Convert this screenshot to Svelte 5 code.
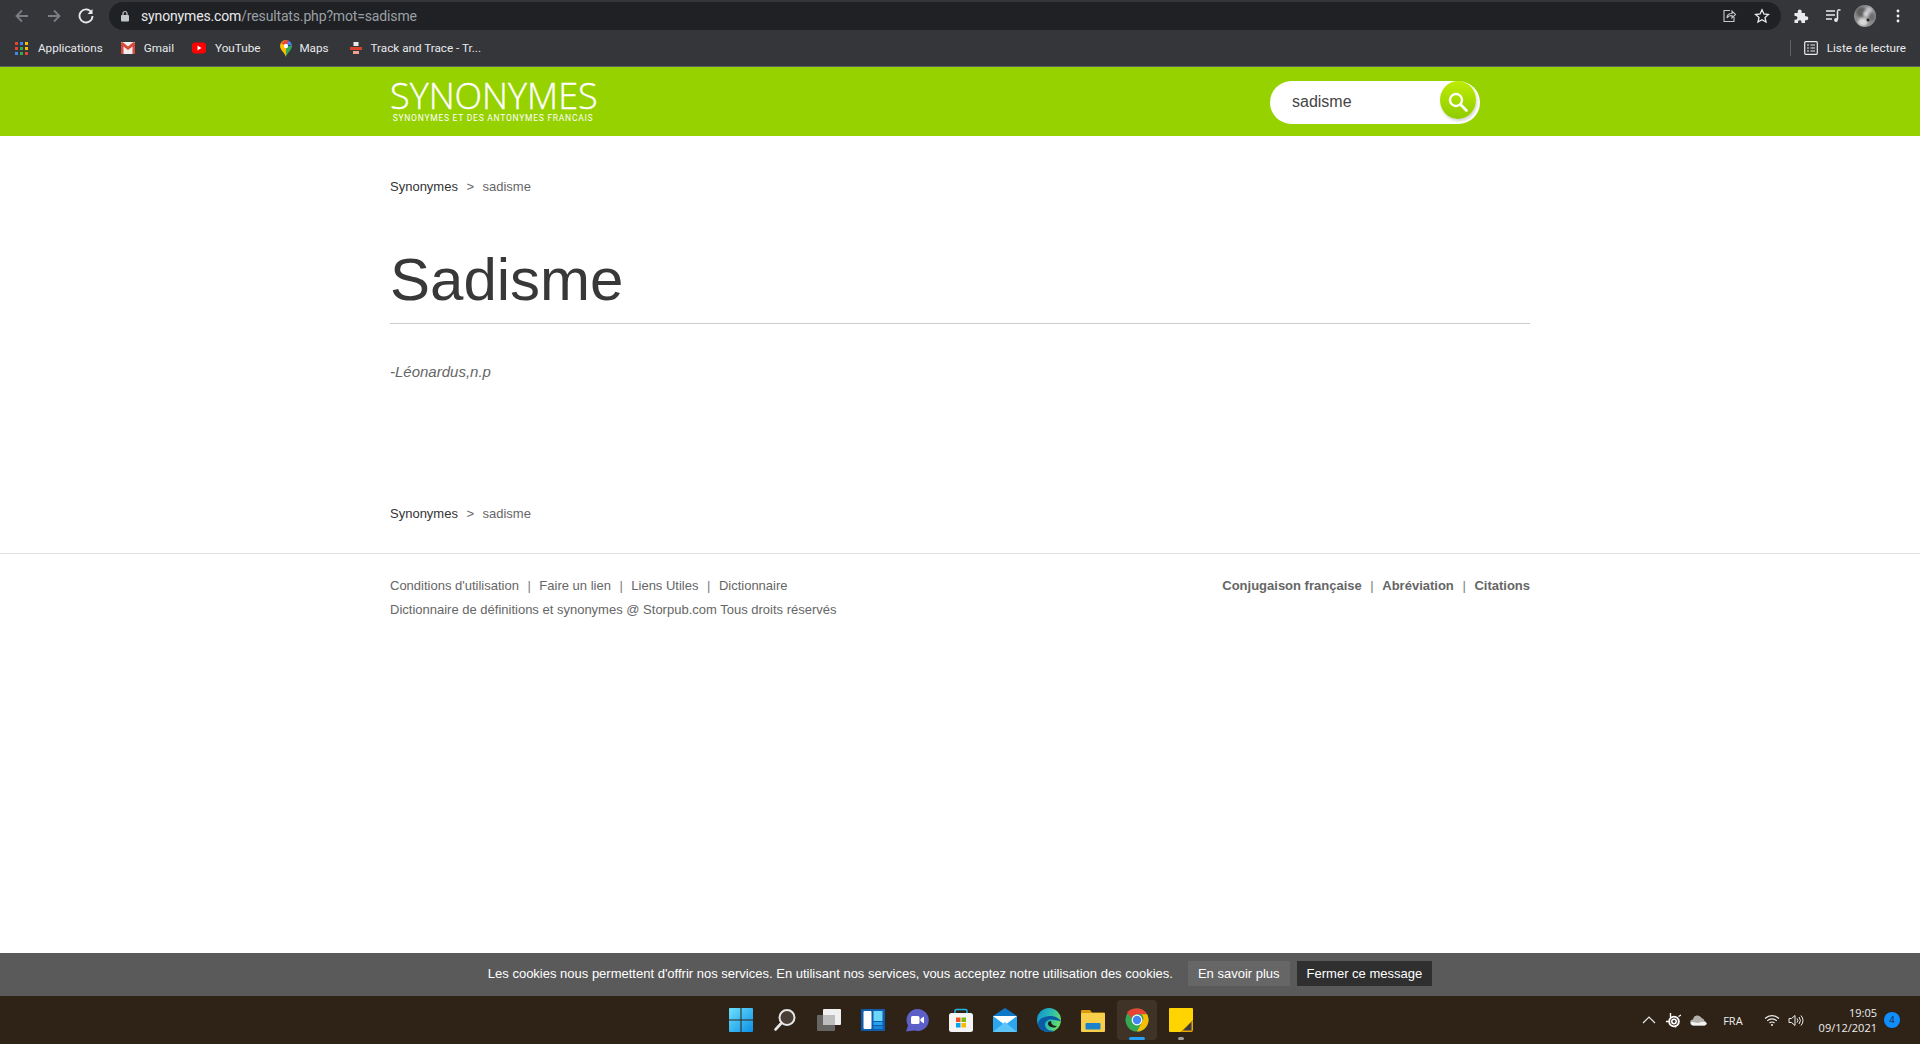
<script>
  const bookmarks = [
    { label: 'Applications', kind: 'apps' },
    { label: 'Gmail', kind: 'gmail' },
    { label: 'YouTube', kind: 'yt' },
    { label: 'Maps', kind: 'maps' },
    { label: 'Track and Trace - Tr...', kind: 'track' }
  ];
  const appColors = ['#ea4335','#4285f4','#fbbc04','#ea4335','#34a853','#fbbc04','#4285f4','#34a853','#ea4335'];
</script>

<div class="page">
  <div class="toolbar">
    <svg class="nav" width="18" height="18" viewBox="0 0 18 18"><path d="M15 9H4M9 3.5 3.5 9 9 14.500" fill="none" stroke="#7b7e83" stroke-width="1.800"/></svg>
    <svg class="nav" width="18" height="18" viewBox="0 0 18 18"><path d="M3 9h11M9 3.500 14.500 9 9 14.500" fill="none" stroke="#7b7e83" stroke-width="1.800"/></svg>
    <svg class="nav" width="18" height="18" viewBox="0 0 18 18"><path d="M14.500 5.500A6.500 6.500 0 1 0 15.500 9" fill="none" stroke="#e8eaed" stroke-width="1.800"/><path d="M15.500 2v5h-5z" fill="#e8eaed"/></svg>
    <div class="omnibox">
      <svg width="10" height="12" viewBox="0 0 10 12"><rect x="1" y="5" width="8" height="6.500" rx="1" fill="#c4c7c9"/><path d="M3 5V3.500a2 2 0 0 1 4 0V5" fill="none" stroke="#c4c7c9" stroke-width="1.200"/></svg>
      <span class="url"><b>synonymes.com</b>/resultats.php?mot=sadisme</span>
      <span class="grow"></span>
      <svg width="16" height="16" viewBox="0 0 16 16"><path d="M9 2.500H3v11h10V9" fill="none" stroke="#c4c7c9" stroke-width="1.100"/><path d="M6 10c0-3 2-4.500 5-4.500V3l3.500 3.500L11 10V7.500C9 7.500 7 8 6 10z" fill="none" stroke="#c4c7c9" stroke-width="1.100"/></svg>
      <svg class="star" width="16" height="16" viewBox="0 0 16 16"><path d="m8 1.800 1.900 4.200 4.500.5-3.400 3 1 4.500L8 11.700 4 14l1-4.500-3.400-3 4.500-.5z" fill="none" stroke="#e8eaed" stroke-width="1.300"/></svg>
    </div>
    <svg class="ext" width="16" height="16" viewBox="0 0 16 16"><path d="M1.500 5h3.200V3.500a2 2 0 0 1 4 0V5h3.300v3.200h1.300a2 2 0 0 1 0 4H12V15H8.500v-1.300a1.800 1.800 0 0 0-3.500 0V15H1.500v-3.300H3a1.900 1.900 0 0 0 0-3.700H1.500z" fill="#e8eaed"/></svg>
    <svg class="media" width="16" height="16" viewBox="0 0 16 16"><path d="M1 3h9M1 7h9M1 11h6" stroke="#e8eaed" stroke-width="1.300"/><path d="M12.500 2.500v9" stroke="#e8eaed" stroke-width="1.500"/><path d="M12.500 2h3" stroke="#e8eaed" stroke-width="1.500"/><circle cx="11" cy="12" r="1.900" fill="#e8eaed"/></svg>
    <svg class="avatar" width="22" height="22" viewBox="0 0 22 22">
      <defs><clipPath id="av"><circle cx="11" cy="11" r="11"/></clipPath><filter id="soft"><feGaussianBlur stdDeviation=".9"/></filter></defs>
      <g clip-path="url(#av)">
        <rect width="22" height="22" fill="#8c8c8c"/>
        <g filter="url(#soft)">
          <ellipse cx="7" cy="7" rx="5" ry="5" fill="#5f5f5f"/>
          <ellipse cx="9" cy="17" rx="5" ry="4" fill="#d8d8d8"/>
          <ellipse cx="15" cy="5" rx="3" ry="3" fill="#c2c2c8"/>
          <ellipse cx="12" cy="9" rx="2.500" ry="3" fill="#d5d5d8"/>
          <ellipse cx="18" cy="12" rx="3" ry="4" fill="#6d6d72"/>
        </g>
        <circle cx="14" cy="15" r="1.500" fill="#222"/>
      </g>
    </svg>
    <svg class="dots" width="4" height="16" viewBox="0 0 4 16"><circle cx="2" cy="3" r="1.400" fill="#f1f3f4"/><circle cx="2" cy="8" r="1.400" fill="#f1f3f4"/><circle cx="2" cy="13" r="1.400" fill="#f1f3f4"/></svg>
  </div>

  <div class="bookmarks">
    {#each bookmarks as b}
      <div class="bm" class:maps={b.kind === 'maps'}>
        {#if b.kind === 'apps'}
          <div class="apps">{#each appColors as c}<i style:background={c}></i>{/each}</div>
        {:else if b.kind === 'gmail'}
          <svg width="14" height="12" viewBox="0 0 14 12"><rect width="14" height="12" rx="1" fill="#eee"/><path d="M0 1v11h2.500V4.500L7 8l4.500-3.500V12H14V1L12.500 0 7 4.500 1.500 0z" fill="#d9483b"/></svg>
        {:else if b.kind === 'yt'}
          <svg width="14" height="12" viewBox="0 0 14 12"><rect width="14" height="11" y=".5" rx="3" fill="#f00"/><path d="m5.500 3.500 4 2.500-4 2.500z" fill="#fff"/></svg>
        {:else if b.kind === 'maps'}
          <svg width="12" height="17" viewBox="0 0 12 17"><path d="M6 17C5 13 0 10 0 6a6 6 0 0 1 6-6z" fill="#fbbc04"/><path d="M6 17c1-4 6-7 6-11L6 6z" fill="#34a853"/><path d="M12 6a6 6 0 0 0-6-6v4z" fill="#4285f4"/><path d="M1 3 6 6 9 1 6 0z" fill="#ea4335"/><circle cx="6" cy="6" r="2.200" fill="#fff"/></svg>
        {:else}
          <svg width="12" height="14" viewBox="0 0 12 14"><rect x="3.500" y="1" width="5" height="4" fill="#e8e8e8"/><rect y="6" width="12" height="3" fill="#d8432c"/><rect x="3" y="10" width="6" height="3" fill="#f0a090"/></svg>
        {/if}
        <span>{b.label}</span>
      </div>
    {/each}
    <span class="grow"></span>
    <div class="divider"></div>
    <svg width="14" height="14" viewBox="0 0 14 14"><rect x=".7" y=".7" width="12.600" height="12.600" rx="1" fill="none" stroke="#e8eaed" stroke-width="1.200"/><path d="M3 4h2M3 7h2M3 10h2M6.500 4h4.500M6.500 7h4.500M6.500 10h4.500" stroke="#e8eaed" stroke-width="1.200"/></svg>
    <span class="reading">Liste de lecture</span>
  </div>

  <header class="site-head">
    <div class="wrap head-row">
      <div class="logo">
        <div class="logo-main">SYNONYMES</div>
        <div class="logo-sub">SYNONYMES ET DES ANTONYMES FRANCAIS</div>
      </div>
      <div class="search">
        <span class="q">sadisme</span>
        <div class="go">
          <svg width="24" height="24" viewBox="0 0 24 24"><circle cx="10" cy="10" r="6" fill="none" stroke="#fff" stroke-width="2.400"/><path d="m14.500 14.500 6 6" stroke="#fff" stroke-width="2.800" stroke-linecap="round"/></svg>
        </div>
      </div>
    </div>
  </header>

  <main class="wrap main">
    <div class="crumb"><a href="#a">Synonymes</a><span class="sep">&gt;</span><span class="cur">sadisme</span></div>
    <h1>Sadisme</h1>
    <p class="credit">-Léonardus,n.p</p>
    <div class="crumb crumb-low"><a href="#a">Synonymes</a><span class="sep">&gt;</span><span class="cur">sadisme</span></div>
  </main>

  <footer class="foot">
    <div class="wrap foot-grid">
      <div>
        <div class="links">
          <a href="#a">Conditions d'utilisation</a><i>|</i><a href="#a">Faire un lien</a><i>|</i><a href="#a">Liens Utiles</a><i>|</i><a href="#a">Dictionnaire</a>
        </div>
        <div class="copy">Dictionnaire de définitions et synonymes @ Storpub.com Tous droits réservés</div>
      </div>
      <div class="links strong">
        <a href="#a">Conjugaison française</a><i>|</i><a href="#a">Abréviation</a><i>|</i><a href="#a">Citations</a>
      </div>
    </div>
  </footer>

  <div class="grow"></div>

  <div class="cookie">
    <span>Les cookies nous permettent d'offrir nos services. En utilisant nos services, vous acceptez notre utilisation des cookies.</span>
    <a class="btn more" href="#a">En savoir plus</a>
    <a class="btn close" href="#a">Fermer ce message</a>
  </div>

  <div class="taskbar">
    <div class="tb-icons">
      <div class="tb"><svg width="24" height="24" viewBox="0 0 24 24"><defs><linearGradient id="w" x1="0" y1="0" x2="1" y2="1"><stop offset="0" stop-color="#6ce0fb"/><stop offset="1" stop-color="#0b8fe8"/></linearGradient></defs><path d="M0 1a1 1 0 0 1 1-1h10.500v11.500H0zM12.500 0H23a1 1 0 0 1 1 1v10.500H12.500zM0 12.500h11.500V24H1a1 1 0 0 1-1-1zM12.500 12.500H24V23a1 1 0 0 1-1 1H12.500z" fill="url(#w)"/></svg></div>
      <div class="tb"><svg width="24" height="24" viewBox="0 0 24 24"><circle cx="14" cy="9.500" r="7.500" fill="#4a3f36" stroke="#e6e6e6" stroke-width="2"/><path d="m8.500 15-6 6.500" stroke="#e6e6e6" stroke-width="2.600" stroke-linecap="round"/></svg></div>
      <div class="tb"><svg width="24" height="24" viewBox="0 0 24 24"><rect x="6" y="1" width="18" height="16" rx="1" fill="#f0f0f0"/><rect y="7" width="18" height="16" rx="1" fill="#6b6b6b" opacity=".92"/><rect x="6" y="7" width="12" height="10" fill="#bdbdbd"/></svg></div>
      <div class="tb"><svg width="24" height="24" viewBox="0 0 24 24"><rect y="1" width="24" height="22" rx="1" fill="#0f5cae"/><rect x="2.500" y="3" width="8" height="18" rx="1" fill="#fff"/><rect x="12.500" y="3" width="9" height="10" fill="#6bd6f7"/><rect x="12.500" y="14" width="9" height="3" fill="#27a4ee"/><rect x="12.500" y="18" width="9" height="3" fill="#1b86d8"/></svg></div>
      <div class="tb"><svg width="24" height="24" viewBox="0 0 24 24"><path d="M12.500 1a11 11 0 1 1-3 21.500L1 23.500l2-6A11 11 0 0 1 12.500 1z" fill="#5b5fc7"/><rect x="6" y="8" width="8.500" height="8" rx="1.500" fill="#fff"/><path d="m15.500 11 3.500-2.500v7L15.500 13z" fill="#fff"/></svg></div>
      <div class="tb"><svg width="24" height="24" viewBox="0 0 24 24"><path d="M6 6V3a1.500 1.500 0 0 1 1.500-1.500h9A1.500 1.500 0 0 1 18 3v3" fill="none" stroke="#20b4e8" stroke-width="1.500"/><rect y="5" width="24" height="19" rx="2.500" fill="#f4f4f4"/><rect x="7" y="9.500" width="4.500" height="4.500" fill="#f25022"/><rect x="12.500" y="9.500" width="4.500" height="4.500" fill="#7fba00"/><rect x="7" y="15" width="4.500" height="4.500" fill="#00a4ef"/><rect x="12.500" y="15" width="4.500" height="4.500" fill="#ffb900"/></svg></div>
      <div class="tb"><svg width="24" height="24" viewBox="0 0 24 24"><path d="M0 8 12 0l12 8v16H0z" fill="#0e78c8"/><path d="M0 8h24v16H0z" fill="#2ba6f0"/><path d="M0 8h24L12 17z" fill="#fff"/><path d="M0 24 12 14l12 10z" fill="#5cc4f7"/></svg></div>
      <div class="tb"><svg width="24" height="24" viewBox="0 0 24 24"><defs><linearGradient id="e" x1="0" y1="0" x2="1" y2=".4"><stop offset="0" stop-color="#0d8ed8"/><stop offset=".6" stop-color="#2bbdb0"/><stop offset="1" stop-color="#62dc6a"/></linearGradient></defs><circle cx="12" cy="12" r="12" fill="url(#e)"/><path d="M1 16c0 5 5 8 11 8 2 0 4-.5 5-1.500-5 1-9-2-9-6 0-3 3-5 6-5 3 0 7 1.500 10 1.500 0-1-5-5-10-5S1 10 1 16z" fill="#0b5aa6"/><path d="M14 13c-2 0-3 1-3 2.500 0 3 3.500 4 7 4l2-1.500c-3 0-6-1-6-5z" fill="#221d18"/></svg></div>
      <div class="tb"><svg width="24" height="24" viewBox="0 0 24 24"><path d="M0 3a1 1 0 0 1 1-1h8l2 2.500h12a1 1 0 0 1 1 1V8H0z" fill="#d99a0f"/><rect y="5" width="24" height="19" rx="1" fill="#f8cf4a"/><rect x="4.500" y="15" width="15" height="6.500" rx="1" fill="#1a83c9"/></svg></div>
      <div class="tb active"><svg width="24" height="24" viewBox="0 0 24 24"><circle cx="12" cy="12" r="11.500" fill="#34a853"/><path d="M12 .5a11.500 11.500 0 0 1 10 5.800H12a5.800 5.800 0 0 0-5.500 4L2 4.500A11.500 11.500 0 0 1 12 .5z" fill="#ea4335"/><path d="M22 6.300A11.500 11.500 0 0 1 12 23.500L17 14a5.800 5.800 0 0 0-.5-7.700z" fill="#fbbc04"/><circle cx="12" cy="12" r="5.400" fill="#fff"/><circle cx="12" cy="12" r="4.200" fill="#4285f4"/></svg><b class="run wide"></b></div>
      <div class="tb"><svg width="24" height="24" viewBox="0 0 24 24"><path d="M1 0h22a1 1 0 0 1 1 1v11l-12 12H1a1 1 0 0 1-1-1V1a1 1 0 0 1 1-1z" fill="#ffd400"/><path d="M24 12v10a2 2 0 0 1-2 2H12z" fill="#e8a600"/><path d="M22.500 14v8.500H14z" fill="#3a3a3a"/></svg><b class="run"></b></div>
    </div>
    <div class="tray">
      <svg width="14" height="8" viewBox="0 0 14 8"><path d="m1 7 6-6 6 6" fill="none" stroke="#e8e8e8" stroke-width="1.200"/></svg>
      <svg class="t-steel" width="15" height="15" viewBox="0 0 15 15"><circle cx="8" cy="8.500" r="5.800" fill="#fff"/><circle cx="8" cy="8.500" r="3.600" fill="none" stroke="#3a3025" stroke-width="1"/><circle cx="8" cy="8.500" r="1.400" fill="#3a3025"/><path d="M4.500 0v4M12.500 3.500 15 2M2.500 8.500H0M9.500 14.500v-1" stroke="#fff" stroke-width="1.400"/></svg>
      <svg class="t-cloud" width="17" height="11" viewBox="0 0 17 11"><path d="M3.500 10.500a3 3 0 0 1-.5-6 4.500 4.500 0 0 1 8.500-1.500 3.800 3.800 0 0 1 3 3 2.300 2.300 0 0 1 0 4.500z" fill="#b4b0aa"/><path d="M3.500 10.500a3 3 0 0 1-2.600-3C4 6 7 9 9.500 7.500 11.500 6.500 14 6 16.800 8a2.400 2.400 0 0 1-2.300 2.500z" fill="#f2f2f2"/></svg>
      <span class="lang">FRA</span>
      <svg class="t-wifi" width="16" height="12" viewBox="0 0 16 12"><path d="M1 4.500a10 10 0 0 1 14 0M3.200 6.800a7 7 0 0 1 9.600 0M5.500 9a3.500 3.500 0 0 1 5 0" fill="none" stroke="#eee" stroke-width="1.100"/><circle cx="8" cy="11" r="1" fill="#eee"/></svg>
      <svg class="t-vol" width="16" height="13" viewBox="0 0 16 13"><path d="M1 4.500h2.500L7 1.500v10l-3.500-3H1z" fill="none" stroke="#eee" stroke-width="1"/><path d="M9 4.500a3 3 0 0 1 0 4M11 3a5.500 5.500 0 0 1 0 7M13 1.500a8 8 0 0 1 0 10" fill="none" stroke="#eee" stroke-width="1"/></svg>
      <div class="clock"><div>19:05</div><div>09/12/2021</div></div>
      <div class="notif">4</div>
    </div>
  </div>
</div>

<style>
  :global(body) { margin: 0; background: #fff; }
  * { box-sizing: border-box; }
  a { color: inherit; text-decoration: none; }
  .grow { flex: 1; }
  .page { height: 1044px; overflow: hidden; display: flex; flex-direction: column; font-family: "Liberation Sans", Arial, sans-serif; }
  .wrap { width: 1140px; margin: 0 auto; }

  .toolbar { height: 32px; background: #35363a; display: flex; align-items: center; padding-left: 13px; flex: none; }
  .nav { margin-right: 14px; }
  .omnibox { width: 1672px; height: 28px; flex: none; background: #202124; border-radius: 14px; display: flex; align-items: center; padding: 0 11px 0 11px; }
  .url { font-size: 14px; color: #9aa0a6; margin-left: 11px; font-family: "Roboto", sans-serif; letter-spacing: -.15px; }
  .url b { font-weight: 400; color: #e8eaed; }
  .star { margin-left: 17px; }
  .ext { margin-left: 12px; }
  .media { margin-left: 16px; }
  .avatar { margin-left: 13px; flex: none; }
  .dots { margin-left: 20px; flex: none; }

  .bookmarks { height: 35px; background: #35363a; border-bottom: 1px solid #5f6166; display: flex; align-items: center; padding: 0 14px 2px 15px; flex: none; color: #e8eaed; font-family: "Roboto", sans-serif; font-size: 11.700px; }
  .bm { display: flex; align-items: center; gap: 9px; margin-right: 18px; }
  .bm.maps { padding-left: 2px; gap: 7px; margin-right: 21px; }
  .apps { display: grid; grid-template-columns: repeat(3, 3px); gap: 2px; width: 14px; height: 14px; align-content: center; }
  .apps i { height: 3px; display: block; }
  .divider { width: 1px; height: 16px; background: #5f6166; margin-right: 13px; }
  .reading { margin-left: 9px; }

  .site-head { height: 69px; background: #96d100; flex: none; }
  .head-row { height: 100%; display: flex; align-items: center; justify-content: space-between; padding-right: 50px; }
  .logo { color: #fff; width: 206px; text-align: center; margin-top: -1px; }
  .logo-main { font-family: "Open Sans", sans-serif; font-weight: 300; font-size: 36px; line-height: 35px; letter-spacing: 0; white-space: nowrap; -webkit-text-stroke: .4px #fff; }
  .logo-sub { font-family: "Roboto", sans-serif; font-size: 8.500px; line-height: 11px; letter-spacing: .74px; white-space: nowrap; font-weight: 400; }
  .search { width: 210px; height: 43px; margin-top: 2px; border-radius: 22px; background: #fff; display: flex; padding: 0 4px 0 22px; }
  .q { flex: 1; font-size: 16px; line-height: 41px; color: #444; }
  .go { width: 36px; height: 38px; border-radius: 50%; background: linear-gradient(#bdec00, #8fcb00); display: flex; align-items: center; justify-content: center; padding-top: 3px; box-shadow: 1px 2px 3px rgba(0,0,0,.18); }

  .main { flex: none; padding-top: 43px; }
  .crumb { font-size: 13px; line-height: 16px; color: #333; }
  .sep { margin: 0 8.500px; color: #666; }
  .cur { color: #666; }
  h1 { margin: 50px 0 0; height: 79px; font-weight: 400; font-size: 60px; line-height: 70px; color: #383838; border-bottom: 1px solid #ccc; }
  .credit { margin: 38px 0 0; font-size: 15px; line-height: 20px; font-style: italic; color: #666; }
  .crumb-low { margin-top: 124px; }

  .foot { margin-top: 31px; padding-top: 22px; border-top: 1px solid #e3e3e3; flex: none; font-size: 13px; color: #666; }
  .foot-grid { display: flex; justify-content: space-between; }
  .links { line-height: 20px; }
  .links i { font-style: normal; margin: 0 8.500px; color: #7d7d7d; font-weight: 400; }
  .strong i { margin: 0 8.600px; }
  .strong { font-weight: 700; }
  .copy { line-height: 20px; margin-top: 4px; }

  .cookie { height: 43px; background: #5a5a5a; color: #fff; display: flex; align-items: center; justify-content: center; font-size: 13px; flex: none; padding-bottom: 2px; }
  .btn { height: 25px; line-height: 25px; padding: 0 10px; }
  .more { background: #666; margin-left: 15px; }
  .close { background: #2f2f2f; margin-left: 7px; }

  .taskbar { height: 48px; background: #2f2318; display: flex; align-items: center; flex: none; position: relative; }
  .tb-icons { display: flex; margin-left: 721px; }
  .tb { width: 40px; height: 40px; margin-right: 4px; display: flex; align-items: center; justify-content: center; position: relative; }
  .tb.active { background: #3f3328; border-radius: 4px; }
  .run { position: absolute; bottom: 0; left: 17px; width: 6px; height: 3px; background: #9d9d9d; border-radius: 2px; }
  .run.wide { left: 12px; width: 16px; background: #2aa0f5; }
  .tray { margin-left: auto; display: flex; align-items: center; color: #eee; font-family: "Open Sans", sans-serif; font-size: 11px; padding-right: 20px; }
  .t-steel { margin-left: 10px; }
  .t-cloud { margin-left: 9px; }
  .lang { margin-left: 16px; }
  .t-wifi { margin-left: 21px; }
  .t-vol { margin-left: 8px; }
  .clock { margin-left: 15px; text-align: right; line-height: 15px; font-size: 11px; }
  .notif { width: 16px; height: 16px; margin-left: 7px; border-radius: 50%; background: #0f8fff; color: #222; font-size: 9.500px; line-height: 16px; text-align: center; }
</style>
